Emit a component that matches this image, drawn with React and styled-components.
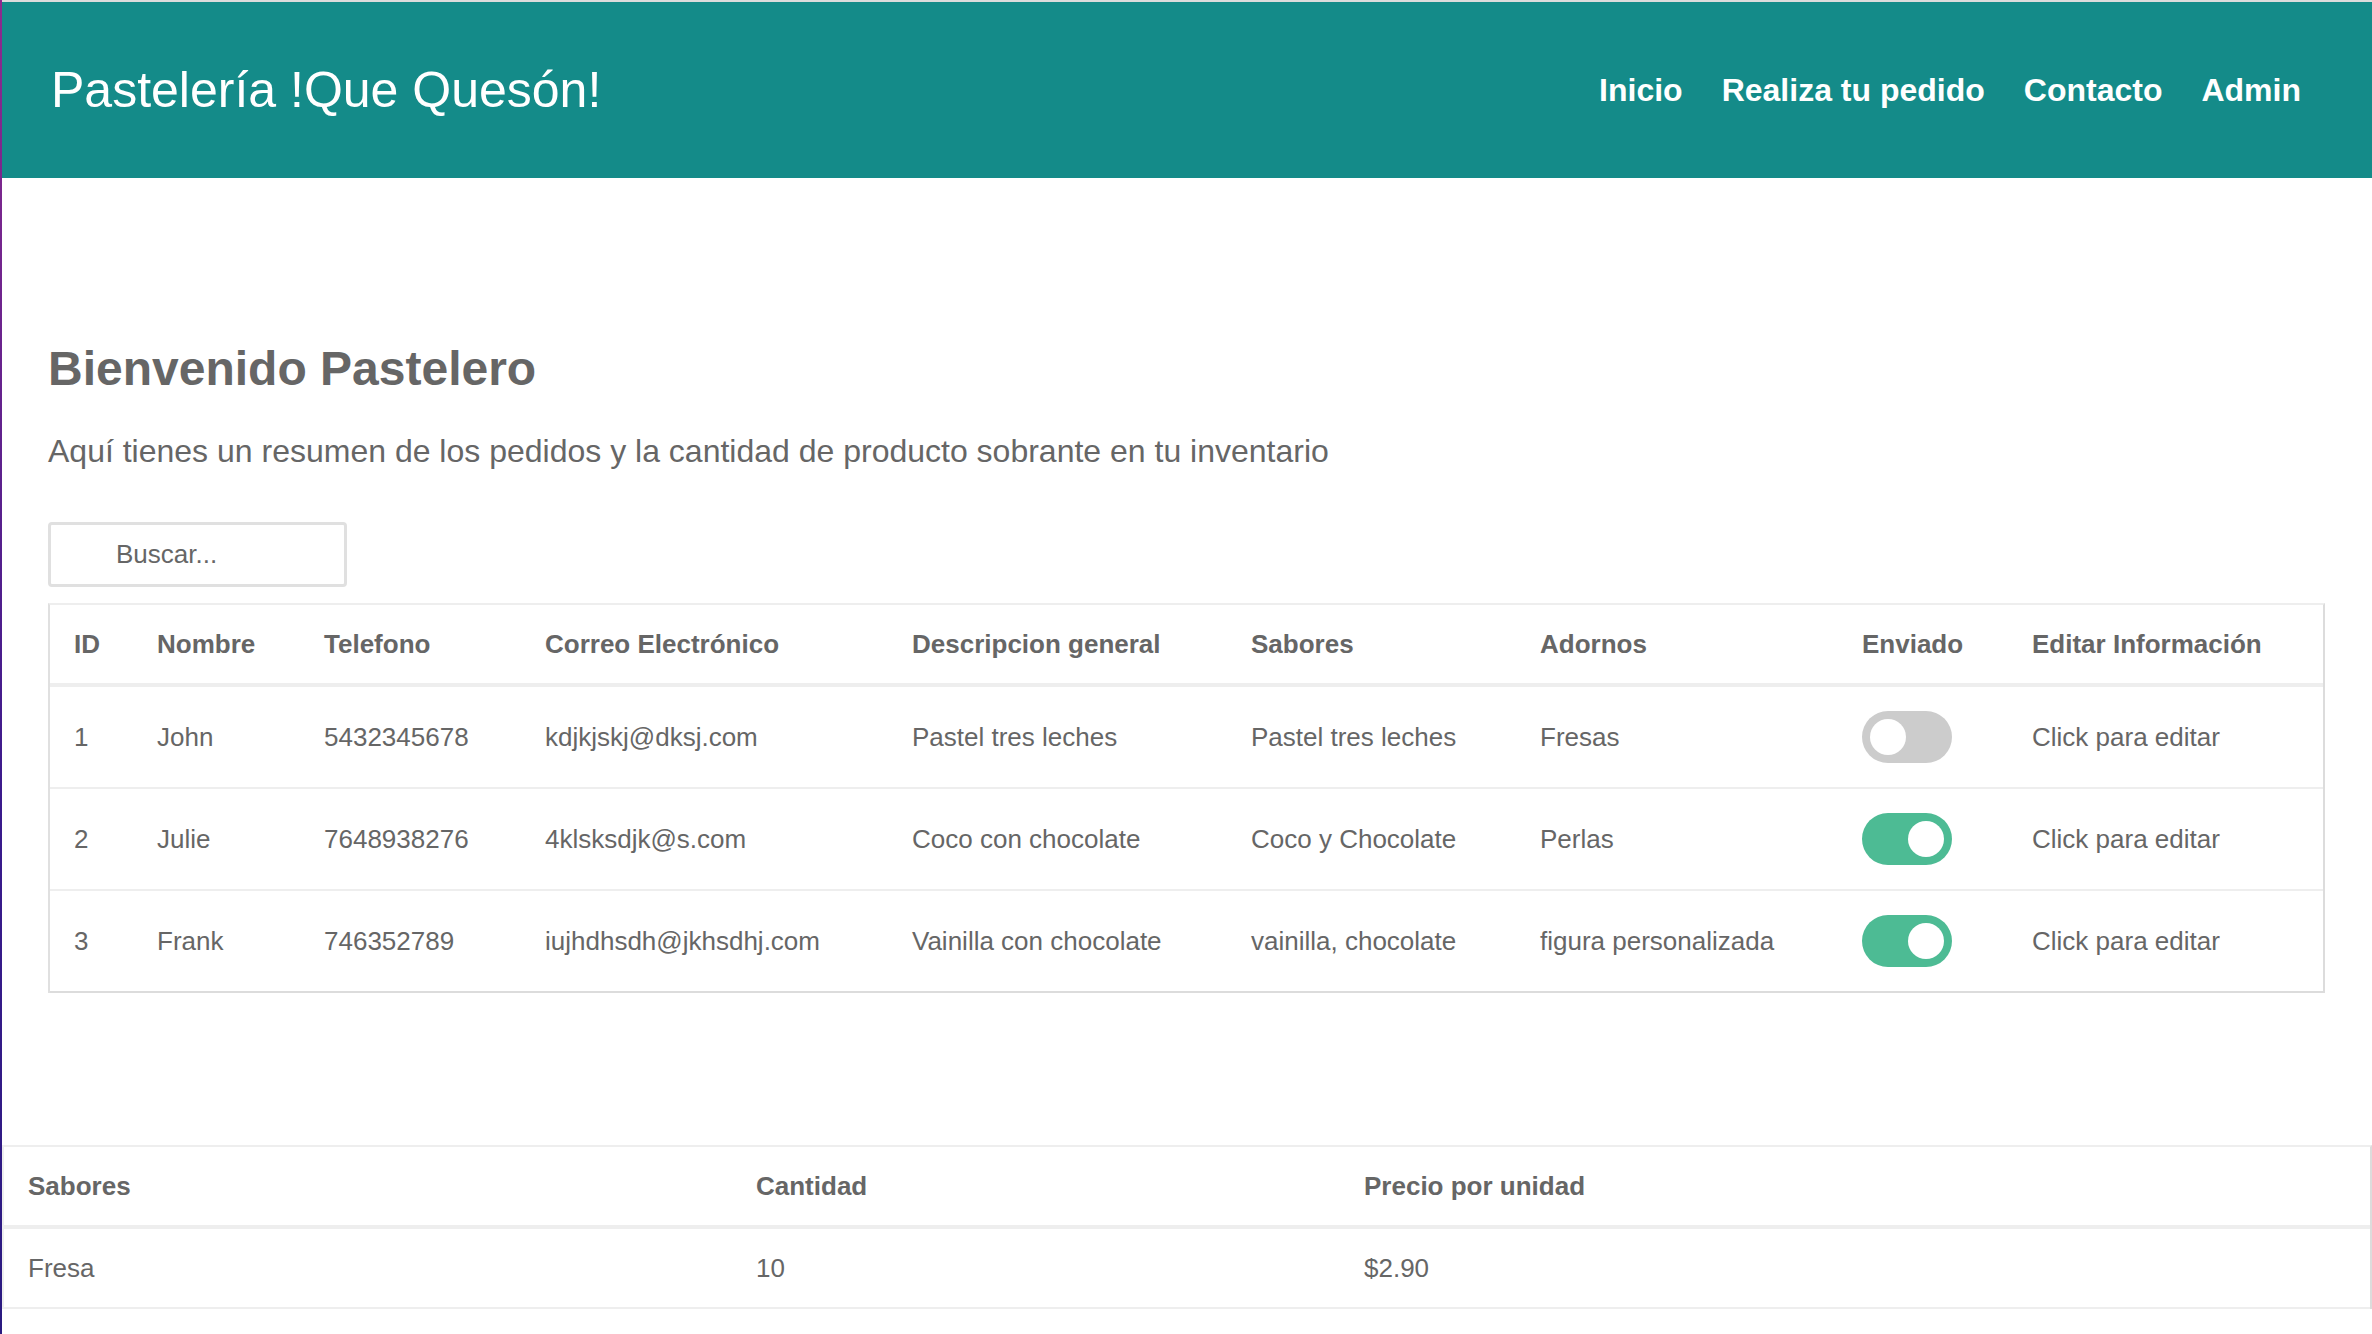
import styled, { createGlobalStyle } from 'styled-components';

const GlobalStyle = createGlobalStyle`
  html, body {
    margin: 0;
    padding: 0;
  }
  body {
    min-height: 100vh;
    background: #fff;
    border-left: 2px solid;
    border-image: linear-gradient(#8e2a8e, #3a1a8c 60%, #2a1a80) 1;
    font-family: 'Liberation Sans', Arial, Helvetica, sans-serif;
    color: #666;
  }
  * {
    box-sizing: border-box;
  }
`;

const Page = styled.div`
  border-top: 2px solid #dcdcdc;
`;

const Header = styled.header`
  display: flex;
  align-items: center;
  justify-content: space-between;
  height: 176px;
  padding: 0 71px 0 49px;
  background-color: #148b89;
`;

const Brand = styled.h1`
  margin: 0;
  font-size: 50px;
  font-weight: 400;
  line-height: 1;
  color: #fff;
`;

const Nav = styled.nav`
  display: flex;
  gap: 39px;
`;

const NavLink = styled.a`
  font-size: 32px;
  font-weight: 700;
  color: #fff;
  text-decoration: none;
  line-height: 1;
  cursor: pointer;
`;

const Main = styled.main`
  padding: 167px 45px 0 46px;
`;

const Title = styled.h2`
  margin: 0;
  font-size: 48px;
  line-height: 1;
  font-weight: 700;
  color: #666;
`;

const Intro = styled.p`
  margin: 42px 0 0;
  font-size: 32px;
  line-height: 1;
  color: #666;
`;

const Search = styled.input`
  display: block;
  width: 299px;
  height: 65px;
  margin-top: 55px;
  padding: 0 0 0 65px;
  border: 3px solid #e0e0e0;
  border-radius: 4px;
  font-family: inherit;
  font-size: 26px;
  color: #666;
  outline: none;

  &::placeholder {
    color: #666;
  }
`;

const Table = styled.table`
  width: ${(p) => (p.$full ? '100%' : '2277px')};
  margin-top: ${(p) => p.$mt || 0}px;
  border-spacing: 0;
  table-layout: fixed;
  border-top: 2px solid #eee;
  border-left: 2px solid ${(p) => (p.$full ? '#eee' : '#e0e0e0')};
  border-right: 2px solid #dcdcdc;
  font-size: 26px;
  color: #666;
`;

const Th = styled.th`
  padding: 26px 24px;
  line-height: 26px;
  text-align: left;
  font-weight: 700;
  border-bottom: 4px solid #eee;
  white-space: nowrap;
`;

const Td = styled.td`
  padding: ${(p) => (p.$compact ? '26px 24px' : '24px 24px')};
  line-height: ${(p) => (p.$compact ? '26px' : '52px')};
  border-bottom: 2px solid ${(p) => (p.$last ? '#dcdcdc' : '#eee')};
  white-space: nowrap;
`;

const Toggle = styled.span`
  display: flex;
  align-items: center;
  justify-content: ${(p) => (p.$on ? 'flex-end' : 'flex-start')};
  width: 90px;
  height: 52px;
  padding: 0 8px;
  border-radius: 26px;
  background-color: ${(p) => (p.$on ? '#4dbb94' : '#cccccc')};
  cursor: pointer;

  &::after {
    content: '';
    width: 36px;
    height: 36px;
    border-radius: 50%;
    background: #fff;
  }
`;

const Stock = styled.section`
  margin-top: 152px;
  padding-bottom: 40px;
`;

const orderCols = [83, 167, 221, 367, 339, 289, 322, 170, 315];
const orderHeads = [
  'ID',
  'Nombre',
  'Telefono',
  'Correo Electrónico',
  'Descripcion general',
  'Sabores',
  'Adornos',
  'Enviado',
  'Editar Información',
];

const orders = [
  {
    id: 1,
    name: 'John',
    phone: '5432345678',
    mail: 'kdjkjskj@dksj.com',
    desc: 'Pastel tres leches',
    flavors: 'Pastel tres leches',
    deco: 'Fresas',
    sent: false,
  },
  {
    id: 2,
    name: 'Julie',
    phone: '7648938276',
    mail: '4klsksdjk@s.com',
    desc: 'Coco con chocolate',
    flavors: 'Coco y Chocolate',
    deco: 'Perlas',
    sent: true,
  },
  {
    id: 3,
    name: 'Frank',
    phone: '746352789',
    mail: 'iujhdhsdh@jkhsdhj.com',
    desc: 'Vainilla con chocolate',
    flavors: 'vainilla, chocolate',
    deco: 'figura personalizada',
    sent: true,
  },
];

const stock = [{ flavor: 'Fresa', qty: 10, price: '$2.90' }];

function App() {
  return (
    <>
      <GlobalStyle />
      <Page>
        <Header>
          <Brand>Pastelería !Que Quesón!</Brand>
          <Nav>
            <NavLink>Inicio</NavLink>
            <NavLink>Realiza tu pedido</NavLink>
            <NavLink>Contacto</NavLink>
            <NavLink>Admin</NavLink>
          </Nav>
        </Header>

        <Main>
          <Title>Bienvenido Pastelero</Title>
          <Intro>
            Aquí tienes un resumen de los pedidos y la cantidad de producto sobrante en tu inventario
          </Intro>
          <Search placeholder="Buscar..." />

          <Table $mt={16}>
            <colgroup>
              {orderCols.map((w, i) => (
                <col key={i} style={{ width: w }} />
              ))}
            </colgroup>
            <thead>
              <tr>
                {orderHeads.map((h) => (
                  <Th key={h}>{h}</Th>
                ))}
              </tr>
            </thead>
            <tbody>
              {orders.map((o, i) => {
                const last = i === orders.length - 1;
                return (
                  <tr key={o.id}>
                    <Td $last={last}>{o.id}</Td>
                    <Td $last={last}>{o.name}</Td>
                    <Td $last={last}>{o.phone}</Td>
                    <Td $last={last}>{o.mail}</Td>
                    <Td $last={last}>{o.desc}</Td>
                    <Td $last={last}>{o.flavors}</Td>
                    <Td $last={last}>{o.deco}</Td>
                    <Td $last={last}>
                      <Toggle $on={o.sent} />
                    </Td>
                    <Td $last={last}>Click para editar</Td>
                  </tr>
                );
              })}
            </tbody>
          </Table>
        </Main>

        <Stock>
          <Table $full>
            <colgroup>
              <col style={{ width: 728 }} />
              <col style={{ width: 608 }} />
              <col />
            </colgroup>
            <thead>
              <tr>
                <Th>Sabores</Th>
                <Th>Cantidad</Th>
                <Th>Precio por unidad</Th>
              </tr>
            </thead>
            <tbody>
              {stock.map((s) => (
                <tr key={s.flavor}>
                  <Td $compact>{s.flavor}</Td>
                  <Td $compact>{s.qty}</Td>
                  <Td $compact>{s.price}</Td>
                </tr>
              ))}
            </tbody>
          </Table>
        </Stock>
      </Page>
    </>
  );
}

export default App;
